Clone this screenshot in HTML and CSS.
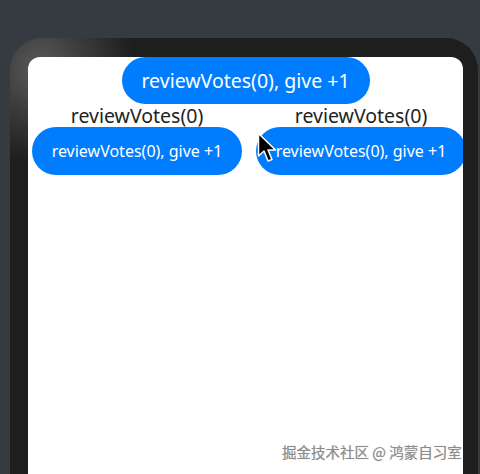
FILE: index.html
```html
<!DOCTYPE html>
<html>

<head>
  <meta charset="utf-8">
  <title>reviewVotes</title>
  <link rel="stylesheet" href="styles.css">
</head>

<body>
  <div class="device">
    <div class="screen">
      <button class="vote-btn big">reviewVotes(0), give +1</button>

      <div class="row">
        <div class="col">
          <div class="label">reviewVotes(0)</div>
          <button class="vote-btn">reviewVotes(0), give +1</button>
        </div>
        <div class="col">
          <div class="label">reviewVotes(0)</div>
          <button class="vote-btn">reviewVotes(0), give +1</button>
        </div>
      </div>
    </div>
  </div>

  <!-- mouse pointer over the second button -->
  <svg class="cursor" width="20" height="32" viewBox="0 0 20 32">
    <path d="M1.5 1.5 L1.5 24 L7 19 L11 29 L15 27.5 L11 18 L18.5 18 Z" fill="#000" stroke="#fff" stroke-width="1.5" stroke-linejoin="round" />
  </svg>

  <div class="watermark">掘金技术社区 @ 鸿蒙自习室</div>
</body>

</html>
```

FILE: styles.css
```css
body {
  margin: 0;
  height: 474px;
  overflow: hidden;
  background: #363a41;
  font-family: "Noto Sans", Roboto, sans-serif;
}

.device {
  margin: 38px 2px 0 10px;
  height: 436px;
  padding: 19px 15px 0 18px;
  box-sizing: border-box;
  border-radius: 32px 32px 0 0;
  background: radial-gradient(circle at 30px 30px, #5a5a5a 0, #3c3c3c 45px, #1e1e1e 95px);
}

.screen {
  height: 100%;
  background: #fff;
  border-radius: 12px 12px 0 0;
  overflow: hidden;
  display: flex;
  flex-direction: column;
  align-items: center;
}

.vote-btn {
  border: none;
  background: #007dff;
  color: #fff;
  font-family: "Noto Sans", Roboto, sans-serif;
  font-size: 16px;
  width: 210px;
  height: 48px;
  border-radius: 24px;
  padding: 0;
}

.vote-btn.big {
  flex: none;
  width: 248px;
  height: 47px;
  font-size: 19.5px;
}

.row {
  align-self: stretch;
  display: flex;
  gap: 14px;
  padding-left: 4px;
}

.col {
  display: flex;
  flex-direction: column;
  align-items: center;
}

.label {
  height: 23px;
  line-height: 23px;
  font-size: 19.5px;
  color: #222;
}

.cursor {
  position: absolute;
  left: 257px;
  top: 132px;
}

.watermark {
  position: absolute;
  left: 282px;
  top: 441px;
  font-family: "Noto Sans CJK SC", sans-serif;
  font-size: 14.5px;
  color: #8c8c8c;
  text-shadow: 0 0 1px #bbb;
}
```
